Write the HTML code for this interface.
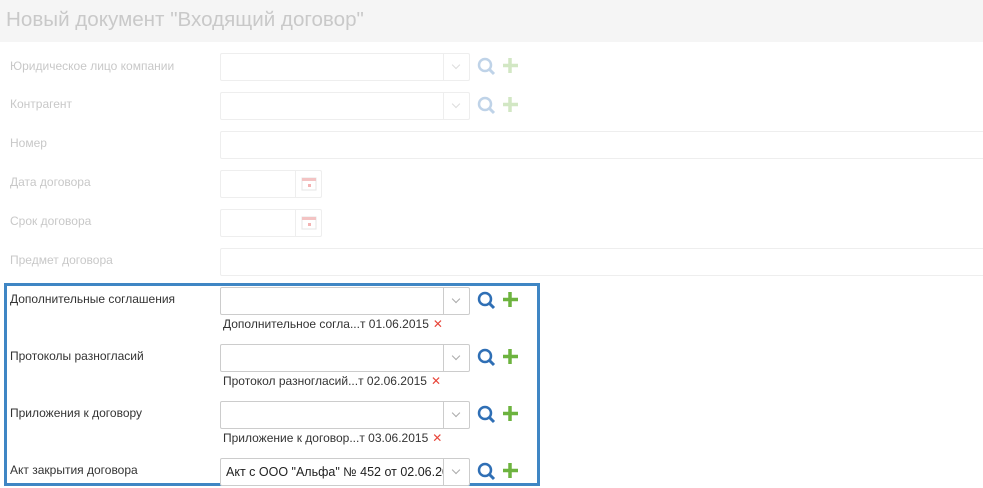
<!DOCTYPE html>
<html><head><meta charset="utf-8"><style>
body{margin:0;width:983px;height:488px;overflow:hidden;background:#fff;font-family:"Liberation Sans",Arial,sans-serif;position:relative}
.hdr{position:absolute;left:0;top:0;width:983px;height:42px;background:#f5f5f5}
.hdr span{position:absolute;left:6px;top:8px;font-size:20.6px;color:#c9c9c9}
.lbl{position:absolute;left:10px;font-size:12px;color:#333}
.f .lbl{color:#c8c8c8}
.in{position:absolute;box-sizing:border-box;border:1px solid #ccc;border-radius:2px;background:#fff;height:28px}
.f .in{border-color:#eee}
.dd{position:absolute;right:0;top:0;width:25px;height:26px;border-left:1px solid #ccc}
.f .dd{border-left-color:#eee}
.dd:after{content:"";position:absolute;left:9px;top:8px;width:5px;height:5px;border-right:1.5px solid #aaa;border-bottom:1.5px solid #aaa;transform:rotate(45deg)}
.f .dd:after{border-color:#ddd}
.ic{position:absolute}
.tag{position:absolute;left:223px;font-size:12px;color:#333}
.tag b{color:#e8463a;font-weight:normal;margin-left:4px}
.cal{position:absolute;right:0;top:0;width:25px;height:26px;border-left:1px solid #eee}
.box{position:absolute;left:4px;top:283px;width:530px;height:197px;border:3px solid #3f86c4}
</style></head><body>
<div class="hdr"><span>Новый документ "Входящий договор"</span></div>
<div class="f">
<div class="lbl" style="top:59px">Юридическое лицо компании</div>
<div class="in" style="left:220px;top:53px;width:250px"><div class="dd"></div></div>
<div class="lbl" style="top:97px">Контрагент</div>
<div class="in" style="left:220px;top:92px;width:250px"><div class="dd"></div></div>
<div class="lbl" style="top:136px">Номер</div>
<div class="in" style="left:220px;top:131px;width:770px"></div>
<div class="lbl" style="top:175px">Дата договора</div>
<div class="in" style="left:220px;top:170px;width:102px"><div class="cal"><svg width="25" height="26"><rect x="6" y="7" width="14" height="12" fill="none" stroke="#e5e5e5"/><rect x="6" y="7" width="14" height="3" fill="#f3c3c3"/><rect x="12" y="13" width="3" height="3" fill="#f3b3b3"/></svg></div></div>
<div class="lbl" style="top:214px">Срок договора</div>
<div class="in" style="left:220px;top:209px;width:102px"><div class="cal"><svg width="25" height="26"><rect x="6" y="7" width="14" height="12" fill="none" stroke="#e5e5e5"/><rect x="6" y="7" width="14" height="3" fill="#f3c3c3"/><rect x="12" y="13" width="3" height="3" fill="#f3b3b3"/></svg></div></div>
<div class="lbl" style="top:253px">Предмет договора</div>
<div class="in" style="left:220px;top:248px;width:770px"></div>
</div>
<div class="box"></div>
<div class="lbl" style="top:292px">Дополнительные соглашения</div>
<div class="in" style="left:220px;top:287px;width:250px"><div class="dd"></div></div>
<div class="tag" style="top:317px">Дополнительное согла...т 01.06.2015<b>✕</b></div>
<div class="lbl" style="top:349px">Протоколы разногласий</div>
<div class="in" style="left:220px;top:344px;width:250px"><div class="dd"></div></div>
<div class="tag" style="top:374px">Протокол разногласий...т 02.06.2015<b>✕</b></div>
<div class="lbl" style="top:406px">Приложения к договору</div>
<div class="in" style="left:220px;top:401px;width:250px"><div class="dd"></div></div>
<div class="tag" style="top:431px">Приложение к договор...т 03.06.2015<b>✕</b></div>
<div class="lbl" style="top:463px">Акт закрытия договора</div>
<div class="in" style="left:220px;top:458px;width:250px;overflow:hidden"><div style="position:absolute;left:5px;top:6px;font-size:12.5px;color:#222;white-space:nowrap;width:218px;overflow:hidden">Акт с ООО "Альфа" № 452 от 02.06.2015</div><div class="dd"></div></div>
<svg class="ic" style="left:0;top:0" width="983" height="488">
<g opacity="0.3"><circle cx="485" cy="65" r="6" fill="none" stroke="#2f6fb5" stroke-width="2.5"/><line x1="489" y1="69" x2="494" y2="74" stroke="#2f6fb5" stroke-width="3"/><path d="M510 58v15M503 65.5h15" stroke="#6db33f" stroke-width="3.5"/></g>
<g opacity="0.3" transform="translate(0,39)"><circle cx="485" cy="65" r="6" fill="none" stroke="#2f6fb5" stroke-width="2.5"/><line x1="489" y1="69" x2="494" y2="74" stroke="#2f6fb5" stroke-width="3"/><path d="M510 58v15M503 65.5h15" stroke="#6db33f" stroke-width="3.5"/></g>
<g transform="translate(0,234)"><circle cx="485" cy="65" r="6" fill="none" stroke="#2f6fb5" stroke-width="2.5"/><line x1="489" y1="69" x2="494" y2="74" stroke="#2f6fb5" stroke-width="3"/><path d="M510 58v15M503 65.5h15" stroke="#6db33f" stroke-width="3.5"/></g>
<g transform="translate(0,291)"><circle cx="485" cy="65" r="6" fill="none" stroke="#2f6fb5" stroke-width="2.5"/><line x1="489" y1="69" x2="494" y2="74" stroke="#2f6fb5" stroke-width="3"/><path d="M510 58v15M503 65.5h15" stroke="#6db33f" stroke-width="3.5"/></g>
<g transform="translate(0,348)"><circle cx="485" cy="65" r="6" fill="none" stroke="#2f6fb5" stroke-width="2.5"/><line x1="489" y1="69" x2="494" y2="74" stroke="#2f6fb5" stroke-width="3"/><path d="M510 58v15M503 65.5h15" stroke="#6db33f" stroke-width="3.5"/></g>
<g transform="translate(0,405)"><circle cx="485" cy="65" r="6" fill="none" stroke="#2f6fb5" stroke-width="2.5"/><line x1="489" y1="69" x2="494" y2="74" stroke="#2f6fb5" stroke-width="3"/><path d="M510 58v15M503 65.5h15" stroke="#6db33f" stroke-width="3.5"/></g>
</svg>
</body></html>
